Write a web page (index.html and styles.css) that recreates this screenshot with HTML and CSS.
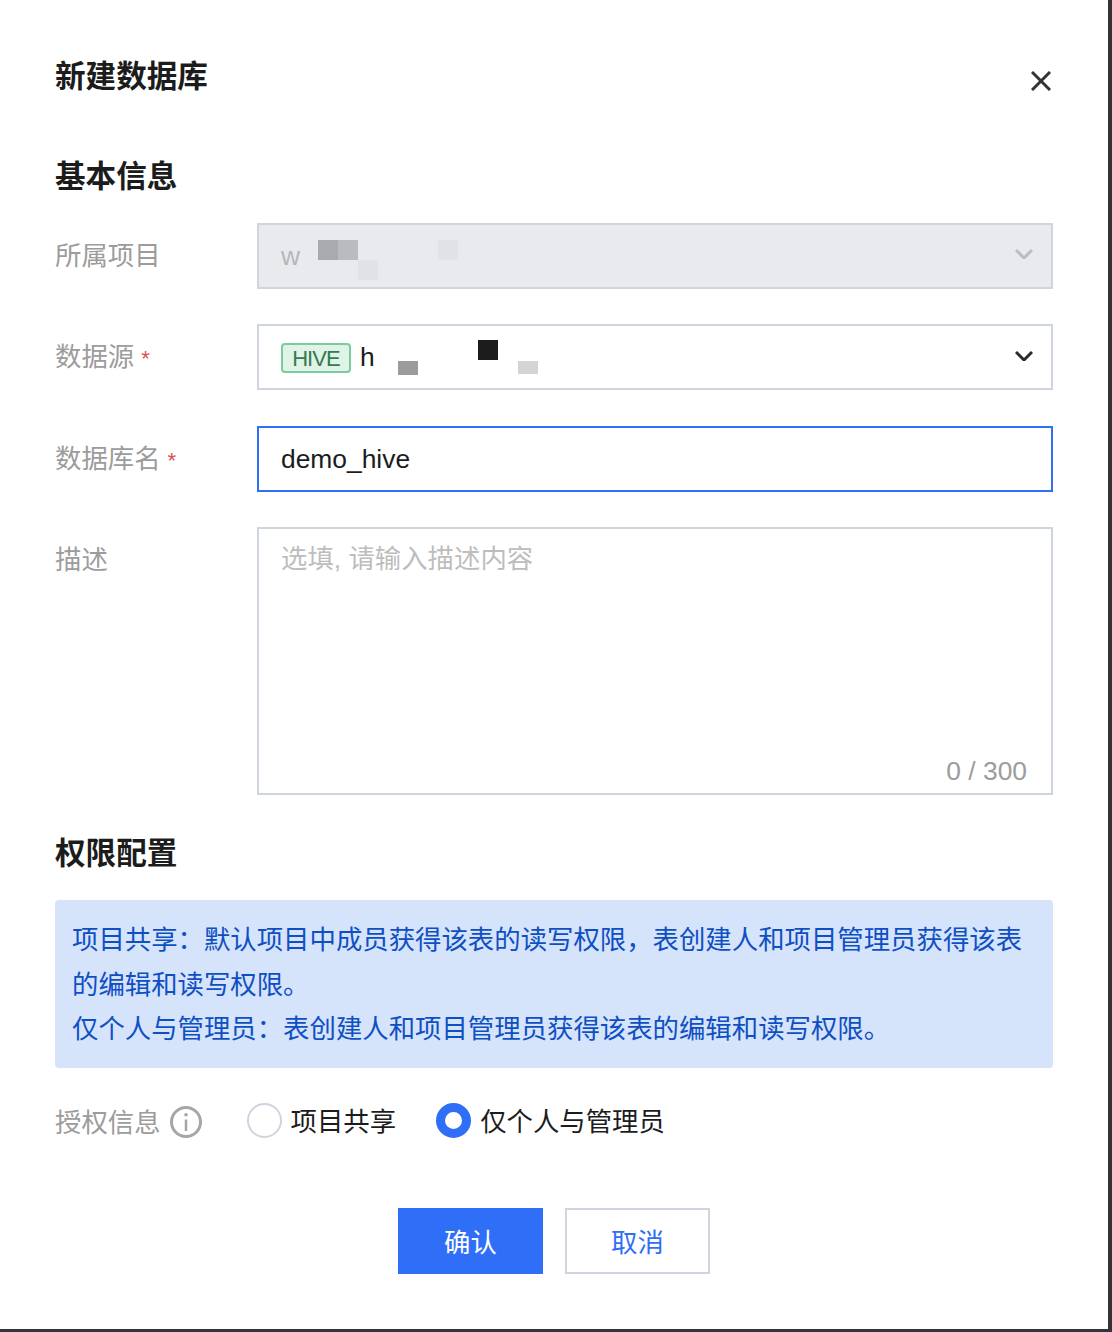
FILE: index.html
```html
<!DOCTYPE html>
<html lang="zh-CN">
<head>
<meta charset="utf-8">
<title>新建数据库</title>
<link rel="stylesheet" href="styles.css">
</head>
<body>
<div class="modal">
  <header class="modal-head">
    <h1 class="modal-title">新建数据库</h1>
    <svg class="close" viewBox="0 0 20 20" width="20" height="20"><path d="M1 1 L19 19 M19 1 L1 19"/></svg>
  </header>
  <h2 class="section-title first">基本信息</h2>
  <div class="form">
    <div class="row">
      <label class="label">所属项目</label>
      <div class="field disabled">
        <span class="value muted">w</span>
        <i class="mask m1"></i><i class="mask m2"></i><i class="mask m3"></i><i class="mask m4"></i>
        <svg class="chev" viewBox="0 0 18 10" width="18" height="10"><path d="M1 1 L9 9 L17 1"/></svg>
      </div>
    </div>
    <div class="row">
      <label class="label">数据源<span class="req">*</span></label>
      <div class="field">
        <span class="tag">HIVE</span><span class="value">h</span>
        <i class="mask m5"></i><i class="mask m6"></i><i class="mask m7"></i>
        <svg class="chev dark" viewBox="0 0 18 10" width="18" height="10"><path d="M1 1 L9 9 L17 1"/></svg>
      </div>
    </div>
    <div class="row">
      <label class="label">数据库名<span class="req">*</span></label>
      <div class="field active"><span class="value">demo_hive</span></div>
    </div>
    <div class="row">
      <label class="label">描述</label>
      <div class="field area">
        <span class="placeholder">选填, 请输入描述内容</span>
        <span class="count">0 / 300</span>
      </div>
    </div>
  </div>
  <h2 class="section-title second">权限配置</h2>
  <div class="notice">
    <p>项目共享：默认项目中成员获得该表的读写权限，表创建人和项目管理员获得该表的编辑和读写权限。</p>
    <p>仅个人与管理员：表创建人和项目管理员获得该表的编辑和读写权限。</p>
  </div>
  <div class="auth">
    <span class="auth-label">授权信息</span>
    <svg class="info" viewBox="0 0 32 32" width="32" height="32"><circle cx="16" cy="16" r="14.5"/><path d="M16 13.5 V25"/><circle class="dot" cx="16" cy="8.8" r="1.8"/></svg>
    <span class="radio"></span><span class="radio-text">项目共享</span>
    <span class="radio on"></span><span class="radio-text">仅个人与管理员</span>
  </div>
  <div class="actions">
    <button class="btn primary">确认</button>
    <button class="btn">取消</button>
  </div>
</div>
</body>
</html>
```

FILE: styles.css
```css
* { box-sizing: border-box; }
html, body { margin: 0; height: 100%; }
body {
  background: #333438;
  width: 1112px;
  height: 1332px;
  overflow: hidden;
  font-family: "Liberation Sans", "Noto Sans CJK SC", sans-serif;
  font-size: 26.4px;
  color: #1c1c1c;
}
.modal {
  width: 1108px;
  height: 1329px;
  background: #fff;
  padding: 0 55px;
}
.modal-head {
  display: flex;
  justify-content: space-between;
  align-items: flex-start;
  height: 153px;
  padding-top: 54px;
}
.modal-title, .section-title {
  margin: 0;
  font-size: 30.6px;
  font-weight: 700;
  line-height: 44px;
  color: #1c1c1c;
}
.close { margin-top: 17px; margin-right: 2px; }
.close path { stroke: #333; stroke-width: 3; fill: none; }
.section-title { height: 69.9px; padding-top: 1px; }
.form { display: flex; flex-direction: column; gap: 35.5px; }
.row { display: flex; align-items: flex-start; }
.label {
  width: 202px;
  flex: none;
  line-height: 66px;
  color: #9c9c9c;
}
.req { color: #d9534f; margin-left: 7px; font-size: 22px; line-height: 1; }
.field {
  position: relative;
  flex: 1;
  height: 66px;
  border: 2px solid #cfd5de;
  background: #fff;
  padding: 0 22px;
  display: flex;
  align-items: center;
  line-height: 62px;
}
.field.disabled { background: #e8eaee; }
.field.active { border-color: #2f6ef6; }
.field.area { height: 268px; align-items: flex-start; }
.value { color: #1c1c1c; }
.value.muted { color: #b5b6ba; }
.tag {
  height: 30px;
  width: 70px;
  margin-top: 2px;
  text-align: center;
  line-height: 27px;
  border: 2px solid #7bcb9d;
  border-radius: 4px;
  background: #dff3e7;
  color: #347a52;
  font-size: 22px;
  letter-spacing: -0.9px;
  margin-right: 9px;
}
.placeholder { color: #bdbdbd; line-height: 60px; }
.count {
  position: absolute;
  right: 24px;
  bottom: 0;
  line-height: 44px;
  color: #9c9c9c;
}
.chev { position: absolute; right: 18px; top: 24px; }
.chev.dark { top: 25px; }
.chev path { fill: none; stroke: #bcbdc1; stroke-width: 3; }
.chev.dark path { stroke: #2b2b2b; }
.mask { position: absolute; display: block; width: 20px; }
.m1 { left: 59px; top: 15px; height: 20px; background: #a9aaae; }
.m2 { left: 79px; top: 15px; height: 20px; background: #babbc0; }
.m3 { left: 99px; top: 35px; height: 20px; background: #e1e2e6; }
.m4 { left: 179px; top: 15px; height: 20px; background: #e1e2e6; }
.m5 { left: 139px; top: 35px; height: 14px; background: #9c9c9c; }
.m6 { left: 219px; top: 14px; height: 20px; background: #1c1c1c; }
.m7 { left: 259px; top: 35px; height: 13px; background: #d4d4d4; }
.section-title.second { margin-top: 35px; height: 70px; }
.notice {
  background: #d5e4fb;
  border-radius: 4px;
  padding: 18px 17px 16px;
  line-height: 44.4px;
  color: #0f4fc4;
}
.notice p { margin: 0; }
.auth {
  display: flex;
  align-items: center;
  margin-top: 35px;
  height: 36px;
}
.auth-label { color: #9c9c9c; line-height: 36px; padding-top: 4px; }
.info { margin-left: 9px; margin-right: 45px; margin-top: 2px; }
.info circle { fill: none; stroke: #a6a6a6; stroke-width: 3; }
.info path { stroke: #a6a6a6; stroke-width: 2.5; }
.info .dot { fill: #a6a6a6; stroke: none; }
.radio {
  width: 35px;
  height: 35px;
  flex: none;
  border-radius: 50%;
  border: 2px solid #cfd5de;
  background: #fff;
}
.radio.on { border: 9px solid #2f6ef6; }
.radio-text { margin-left: 9px; margin-right: 40px; line-height: 36px; padding-top: 2px; }
.actions {
  display: flex;
  justify-content: center;
  gap: 22px;
  margin-top: 69px;
}
.btn {
  width: 145px;
  height: 66px;
  border: 2px solid #cfd5de;
  background: #fff;
  color: #2f6ef6;
  font: inherit;
  padding: 0;
}
.btn.primary { background: #2f6ef6; border-color: #2f6ef6; color: #fff; }
```
